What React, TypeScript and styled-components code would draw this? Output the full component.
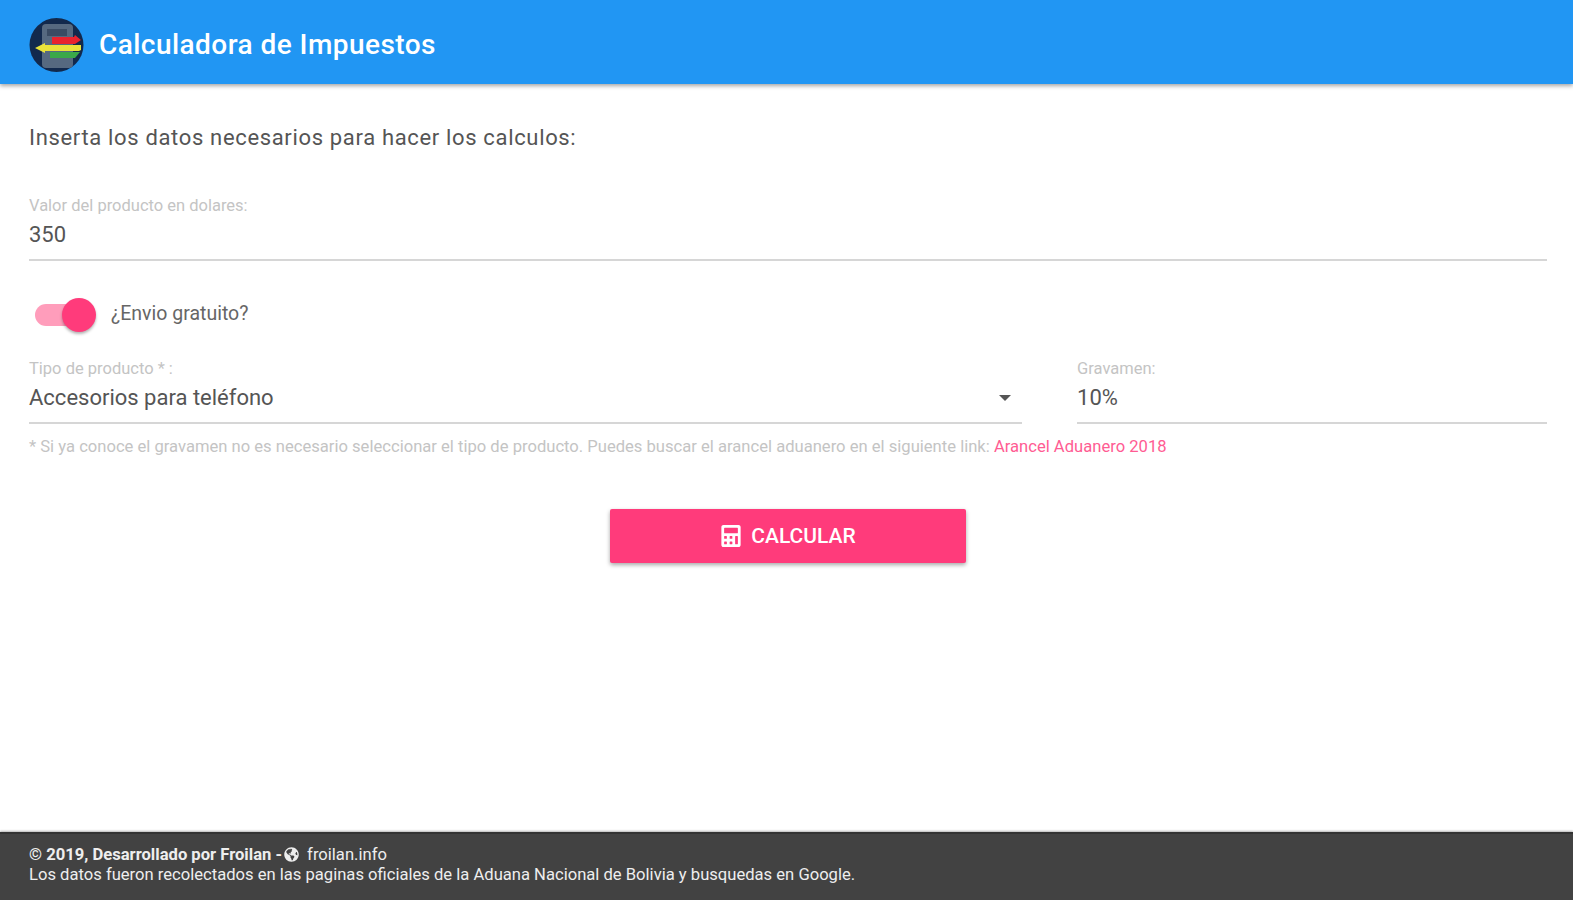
import styled, { createGlobalStyle } from 'styled-components';
import { FaGlobeAmericas, FaCalculator } from 'react-icons/fa';

const GlobalStyle = createGlobalStyle`
  html, body {
    margin: 0;
    padding: 0;
    background: #fff;
    font-family: Roboto, "Liberation Sans", sans-serif;
  }
`;

const Page = styled.div`
  display: flex;
  flex-direction: column;
  height: 900px;
  overflow: hidden;
`;

const Header = styled.header`
  display: flex;
  align-items: center;
  gap: 14px;
  height: 84px;
  box-sizing: border-box;
  padding: 6px 0 0 29px;
  background: #2196f3;
  box-shadow: 0 2px 4px rgba(0, 0, 0, 0.35);
  color: #fff;
`;

const Title = styled.h1`
  margin: 0;
  font-size: 28px;
  font-weight: 500;
  letter-spacing: 0.45px;
  line-height: 1;
`;

const Main = styled.main`
  flex: 1;
  display: flex;
  flex-direction: column;
  padding: 41px 26px 0 29px;
`;

const Intro = styled.p`
  margin: 0;
  font-size: 22px;
  letter-spacing: 0.66px;
  line-height: 26px;
  color: #555;
`;

const Row = styled.div`
  display: flex;
  gap: 55px;
  margin-top: 24px;
`;

const Field = styled.div<{ $grow?: number }>`
  flex: ${(p) => (p.$grow ? `${p.$grow} 1 0` : 'none')};
  height: 65px;
  box-sizing: border-box;
  display: flex;
  flex-direction: column;
  border-bottom: 2px solid #d6d6d6;
`;

const TopField = styled(Field)`
  margin-top: 45px;
`;

const Label = styled.label`
  font-size: 16.5px;
  line-height: 20px;
  color: #c4c4c4;
`;

const Value = styled.div`
  display: flex;
  justify-content: space-between;
  align-items: center;
  margin-top: 5px;
  font-size: 22px;
  line-height: 28px;
  color: #555;
`;

const Caret = styled.span`
  width: 0;
  height: 0;
  margin-right: 11px;
  border-left: 6px solid transparent;
  border-right: 6px solid transparent;
  border-top: 6px solid #555;
`;

const SwitchRow = styled.div`
  display: flex;
  align-items: center;
  gap: 20px;
  margin-top: 34px;
  height: 40px;
  padding-left: 6px;
`;

const Track = styled.div`
  position: relative;
  width: 56px;
  height: 22px;
  border-radius: 11px;
  background: #ff9dbb;
`;

const Thumb = styled.div`
  position: absolute;
  right: -5px;
  top: -6px;
  width: 34px;
  height: 34px;
  border-radius: 50%;
  background: #ff3b7b;
  box-shadow: 0 2px 3px rgba(0, 0, 0, 0.3);
`;

const SwitchLabel = styled.span`
  font-size: 19.5px;
  line-height: 38px;
  height: 40px;
  color: #666;
`;

const Hint = styled.p`
  margin: 13px 0 0;
  font-size: 16.6px;
  line-height: 20px;
  color: #c4c4c4;
`;

const HintLink = styled.a`
  color: #ff5c93;
  text-decoration: none;
`;

const Actions = styled.div`
  display: flex;
  justify-content: center;
  margin-top: 52px;
`;

const Button = styled.button`
  display: flex;
  align-items: center;
  justify-content: center;
  gap: 9px;
  width: 356px;
  height: 54px;
  border: 0;
  border-radius: 2px;
  background: #ff3b7b;
  box-shadow: 0 2px 4px rgba(0, 0, 0, 0.35);
  color: #fff;
  font-family: inherit;
  font-size: 21px;
  font-weight: 500;
`;

const Footer = styled.footer`
  height: 68px;
  box-sizing: border-box;
  padding: 11px 29px 0;
  background: #424242;
  border-top: 2px solid #333;
  box-shadow: 0 -1px 2px rgba(0, 0, 0, 0.3);
  color: #eee;
  font-size: 16.6px;
  line-height: 19.5px;
`;

const FooterLine = styled.div`
  display: flex;
  align-items: center;
  white-space: pre;
`;

const Strong = styled.strong`
  font-weight: 700;
`;

const GlobeIcon = styled(FaGlobeAmericas)`
  margin: 0 8px 0 -2px;
  font-size: 15px;
`;

function Logo() {
  return (
    <svg width="56" height="56" viewBox="0 0 56 56">
      <circle cx="27.5" cy="28" r="27" fill="#12294d" />
      <rect x="13" y="7" width="31" height="44" rx="4" fill="#566980" />
      <rect x="18" y="12" width="20" height="7" fill="#3a4b63" />
      <path d="M23 20h22l1-2 6 5-6 4H23z" fill="#e8232e" />
      <path d="M6 31l10-5v2h36v5l-2 1H16v2z" fill="#e9e23a" />
      <path d="M21 35h30l-5 6H21z" fill="#3aa84a" />
    </svg>
  );
}

const App = () => {
  return (
    <Page>
      <GlobalStyle />
      <Header>
        <Logo />
        <Title>Calculadora de Impuestos</Title>
      </Header>
      <Main>
        <Intro>Inserta los datos necesarios para hacer los calculos:</Intro>
        <TopField>
          <Label>Valor del producto en dolares:</Label>
          <Value>350</Value>
        </TopField>
        <SwitchRow>
          <Track>
            <Thumb />
          </Track>
          <SwitchLabel>¿Envio gratuito?</SwitchLabel>
        </SwitchRow>
        <Row>
          <Field $grow={991}>
            <Label>Tipo de producto * :</Label>
            <Value>
              Accesorios para teléfono
              <Caret />
            </Value>
          </Field>
          <Field $grow={469}>
            <Label>Gravamen:</Label>
            <Value>10%</Value>
          </Field>
        </Row>
        <Hint>
          * Si ya conoce el gravamen no es necesario seleccionar el tipo de producto. Puedes buscar el arancel aduanero en el siguiente link:{' '}
          <HintLink href="#">Arancel Aduanero 2018</HintLink>
        </Hint>
        <Actions>
          <Button>
            <FaCalculator size={22} />
            CALCULAR
          </Button>
        </Actions>
      </Main>
      <Footer>
        <FooterLine>
          <Strong>© 2019, Desarrollado por Froilan - </Strong>
          <GlobeIcon />
          froilan.info
        </FooterLine>
        <FooterLine>Los datos fueron recolectados en las paginas oficiales de la Aduana Nacional de Bolivia y busquedas en Google.</FooterLine>
      </Footer>
    </Page>
  );
};

export default App;
